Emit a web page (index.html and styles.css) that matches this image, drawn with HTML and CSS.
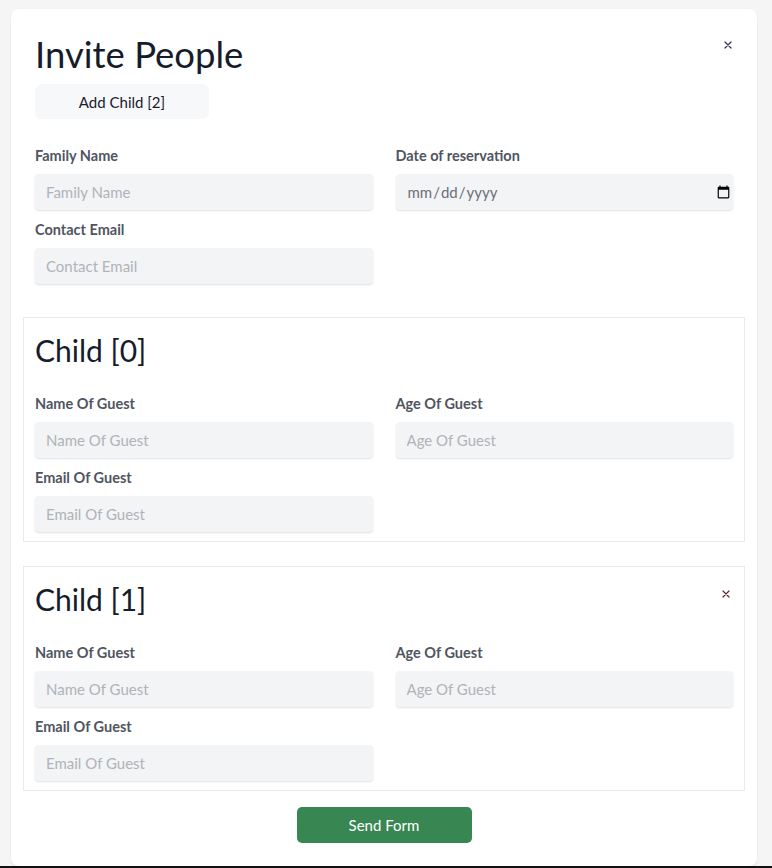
FILE: index.html
```html
<!DOCTYPE html>
<html lang="en">
<head>
<meta charset="utf-8">
<title>Invite People</title>
<link rel="stylesheet" href="styles.css">
</head>
<body>
<div class="page">
  <div class="card">
    <div class="intro">
      <div class="head">
        <h1 class="title">Invite People</h1>
        <button class="close" type="button" aria-label="Close">
          <svg width="8" height="8" viewBox="0 0 8 8"><path d="M1 1L7 7M7 1L1 7" stroke="#2d3142" stroke-width="1.2" stroke-linecap="round"/></svg>
        </button>
      </div>
      <button class="add" type="button">Add Child [2]</button>
      <div class="grid">
        <div class="field">
          <label class="label">Family Name</label>
          <input class="input" type="text" placeholder="Family Name">
        </div>
        <div class="field">
          <label class="label">Date of reservation</label>
          <input class="input date" type="date">
        </div>
        <div class="field">
          <label class="label">Contact Email</label>
          <input class="input" type="email" placeholder="Contact Email">
        </div>
      </div>
    </div>

    <section class="child">
      <div class="child-head">
        <h2 class="child-title">Child [0]</h2>
      </div>
      <div class="grid">
        <div class="field">
          <label class="label">Name Of Guest</label>
          <input class="input" type="text" placeholder="Name Of Guest">
        </div>
        <div class="field">
          <label class="label">Age Of Guest</label>
          <input class="input" type="text" placeholder="Age Of Guest">
        </div>
        <div class="field">
          <label class="label">Email Of Guest</label>
          <input class="input" type="email" placeholder="Email Of Guest">
        </div>
      </div>
    </section>

    <section class="child">
      <div class="child-head">
        <h2 class="child-title">Child [1]</h2>
        <button class="close remove" type="button" aria-label="Remove">
          <svg width="8" height="8" viewBox="0 0 8 8"><path d="M1 1L7 7M7 1L1 7" stroke="#5a2a2a" stroke-width="1.2" stroke-linecap="round"/></svg>
        </button>
      </div>
      <div class="grid">
        <div class="field">
          <label class="label">Name Of Guest</label>
          <input class="input" type="text" placeholder="Name Of Guest">
        </div>
        <div class="field">
          <label class="label">Age Of Guest</label>
          <input class="input" type="text" placeholder="Age Of Guest">
        </div>
        <div class="field">
          <label class="label">Email Of Guest</label>
          <input class="input" type="email" placeholder="Email Of Guest">
        </div>
      </div>
    </section>

    <div class="actions">
      <button class="send" type="button">Send Form</button>
    </div>
  </div>
</div>
<div class="bar"></div>
</body>
</html>
```

FILE: styles.css
```css
* { box-sizing: border-box; }

html, body {
  margin: 0;
  padding: 0;
}

body {
  background: #f5f5f5;
  font-family: "Lato", "Noto Sans", sans-serif;
  color: #1a202c;
  width: 772px;
  height: 868px;
  overflow: hidden;
}

.page {
  padding: 9px 0 0 11px;
  height: 866px;
}

.card {
  width: 746px;
  height: 857px;
  background: #ffffff;
  border-radius: 8px;
  box-shadow: 0 1px 3px rgba(0, 0, 0, 0.08);
  padding: 0 12px 23px;
  display: flex;
  flex-direction: column;
}

.intro {
  padding: 24px 12px 0;
}

.head {
  display: flex;
  justify-content: space-between;
  align-items: flex-start;
}

.title {
  margin: 0;
  font-size: 36.5px;
  font-weight: 400;
  line-height: 43px;
  color: #161c2b;
}

.close {
  border: 0;
  background: transparent;
  padding: 0;
  margin: 8px 1px 0 0;
  width: 8px;
  height: 8px;
  display: flex;
  cursor: pointer;
}

.add {
  margin-top: 8px;
  width: 174px;
  height: 35px;
  border: 0;
  border-radius: 7px;
  background: #f7f8fa;
  font-family: inherit;
  font-size: 15px;
  color: #1a202c;
  cursor: pointer;
}

.grid {
  display: grid;
  grid-template-columns: 1fr 1fr;
  column-gap: 23px;
  row-gap: 9px;
}

.intro .grid {
  margin-top: 26px;
}

.field {
  display: flex;
  flex-direction: column;
}

.label {
  font-size: 14.5px;
  font-weight: 700;
  line-height: 20px;
  padding-top: 1px;
  color: #4f5561;
  margin-bottom: 8px;
}

.input {
  height: 36px;
  border: 0;
  border-radius: 4px;
  background: #f3f4f6;
  box-shadow: 0 1px 2px rgba(0, 0, 0, 0.12);
  padding: 0 11px;
  font-family: inherit;
  font-size: 15px;
  color: #333;
  outline: none;
}

.input::placeholder {
  color: #b0b3b8;
}

.date {
  color: #6b6f76;
  padding-right: 0;
}

.date::-webkit-datetime-edit-text {
  padding: 0;
}

.date::-webkit-datetime-edit-fields-wrapper {
  padding: 0;
}

.child {
  margin-top: 33px;
  border: 1px solid #ebebeb;
  padding: 0 11px 9px;
}

.child + .child {
  margin-top: 24px;
}

.child-head {
  display: flex;
  justify-content: space-between;
  align-items: flex-start;
  padding-top: 14px;
  margin-bottom: 25px;
}

.child-title {
  margin: 0;
  font-size: 30px;
  font-weight: 400;
  line-height: 36px;
  color: #161c2b;
}

.remove {
  margin: 9px 3px 0 0;
}

.actions {
  display: flex;
  justify-content: center;
  margin-top: 16px;
}

.send {
  width: 175px;
  height: 36px;
  border: 0;
  border-radius: 5px;
  background: #388752;
  color: #ffffff;
  font-family: inherit;
  font-size: 15px;
  cursor: pointer;
}

.bar {
  height: 2px;
  background: #111;
}
```
